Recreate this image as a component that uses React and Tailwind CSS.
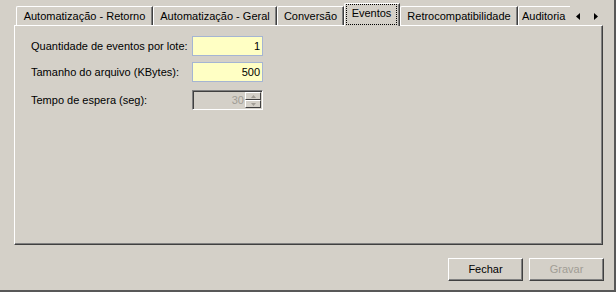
import React from "react";

const tabs = [
  { label: "Automatização - Retorno", w: "w-[137px]" },
  { label: "Automatização - Geral", w: "w-[124px]" },
  { label: "Conversão", w: "w-[67px]" },
  { label: "Eventos", w: "w-[56px]", selected: true },
  { label: "Retrocompatibilidade", w: "w-[118px]" },
  { label: "Auditoria", w: "w-[52px]", clipped: true },
];

function Tab({ label, w, selected, clipped }) {
  if (selected) {
    return (
      <div
        className={`${w} h-[23px] mb-[-1px] relative z-10 bg-[#d4d0c8] border-t border-l border-white border-r border-r-[#404040] shadow-[inset_-1px_0_0_#808080] rounded-tl-[2px] flex items-start`}
      >
        <span className="ml-[1px] w-[51px] h-[21px] border border-dotted border-black flex items-center justify-center pb-[3px] leading-none">
          {label}
        </span>
      </div>
    );
  }
  return (
    <div
      className={`${w} h-[19px] bg-[#d4d0c8] border-t border-l border-white ${
        clipped ? "" : "border-r border-r-[#404040] shadow-[inset_-1px_0_0_#808080]"
      } rounded-tl-[2px] flex items-center ${clipped ? "justify-start pl-[3px]" : "justify-center"} leading-none overflow-hidden whitespace-nowrap pt-[1px]`}
    >
      {label}
    </div>
  );
}

function Row({ label, value, disabled, className }) {
  return (
    <div className={`flex items-center h-[20px] ${className || ""}`}>
      <div className="w-[161px] leading-none">{label}</div>
      {disabled ? (
        <div className="w-[71px] h-[20px] border-t border-l border-t-[#808080] border-l-[#808080] border-b border-r border-b-white border-r-white shadow-[inset_1px_1px_0_#404040] flex items-center justify-end pr-[1px]">
          <span className="text-[#a19d95] leading-none mr-[1px]">{value}</span>
          <div className="flex flex-col w-[16px] h-[16px]">
            {[0, 1].map((i) => (
              <div
                key={i}
                className="h-[8px] bg-[#d4d0c8] border-t border-l border-t-white border-l-white border-b border-r border-b-[#404040] border-r-[#404040] flex items-center justify-center"
              >
                <svg width="5" height="3" viewBox="0 0 5 3">
                  {i === 0 ? (
                    <polygon points="2.5,0 5,3 0,3" fill="#a19d95" />
                  ) : (
                    <polygon points="0,0 5,0 2.5,3" fill="#a19d95" />
                  )}
                </svg>
              </div>
            ))}
          </div>
        </div>
      ) : (
        <div className="w-[71px] h-[20px] border border-[#a5b5d3] bg-[#ffffc4] flex items-center justify-end pr-[2px] leading-none">
          {value}
        </div>
      )}
    </div>
  );
}

function Button({ children, disabled }) {
  return (
    <div
      className={`w-[75px] h-[23px] border-t border-l border-t-white border-l-white border-b border-r border-b-[#404040] border-r-[#404040] shadow-[inset_-1px_-1px_0_#808080] flex items-center justify-center leading-none ${
        disabled ? "text-[#a19d95]" : "text-black"
      }`}
    >
      {children}
    </div>
  );
}

export default function App() {
  return (
    <div className="w-[616px] h-[292px] bg-[#d4d0c8] border-r-2 border-b-2 border-[#585858] flex flex-col font-['Liberation_Sans',Arial,sans-serif] text-[11px] text-black overflow-hidden">
      <div className="flex items-end h-[25px] pl-[16px]">
        {tabs.map((t) => (
          <Tab key={t.label} {...t} />
        ))}
        <div className="h-[19px] flex items-center pt-[2px] ml-[6px] gap-[14px]">
          <svg width="4" height="7" viewBox="0 0 4 7">
            <polygon points="4,0 4,7 0,3.5" fill="#000" />
          </svg>
          <svg width="4" height="7" viewBox="0 0 4 7">
            <polygon points="0,0 0,7 4,3.5" fill="#000" />
          </svg>
        </div>
      </div>
      <div className="ml-[14px] w-[589px] h-[220px] border-t border-l border-white border-r border-b border-r-[#404040] border-b-[#404040] shadow-[inset_-1px_-1px_0_#808080] pl-[16px] pt-[10px] flex flex-col">
        <Row label="Quantidade de eventos por lote:" value="1" />
        <Row label="Tamanho do arquivo (KBytes):" value="500" className="mt-[6px]" />
        <Row label="Tempo de espera (seg):" value="30" disabled className="mt-[8px]" />
      </div>
      <div className="flex justify-end gap-[6px] pr-[10px] mt-[13px]">
        <Button>Fechar</Button>
        <Button disabled>Gravar</Button>
      </div>
    </div>
  );
}
